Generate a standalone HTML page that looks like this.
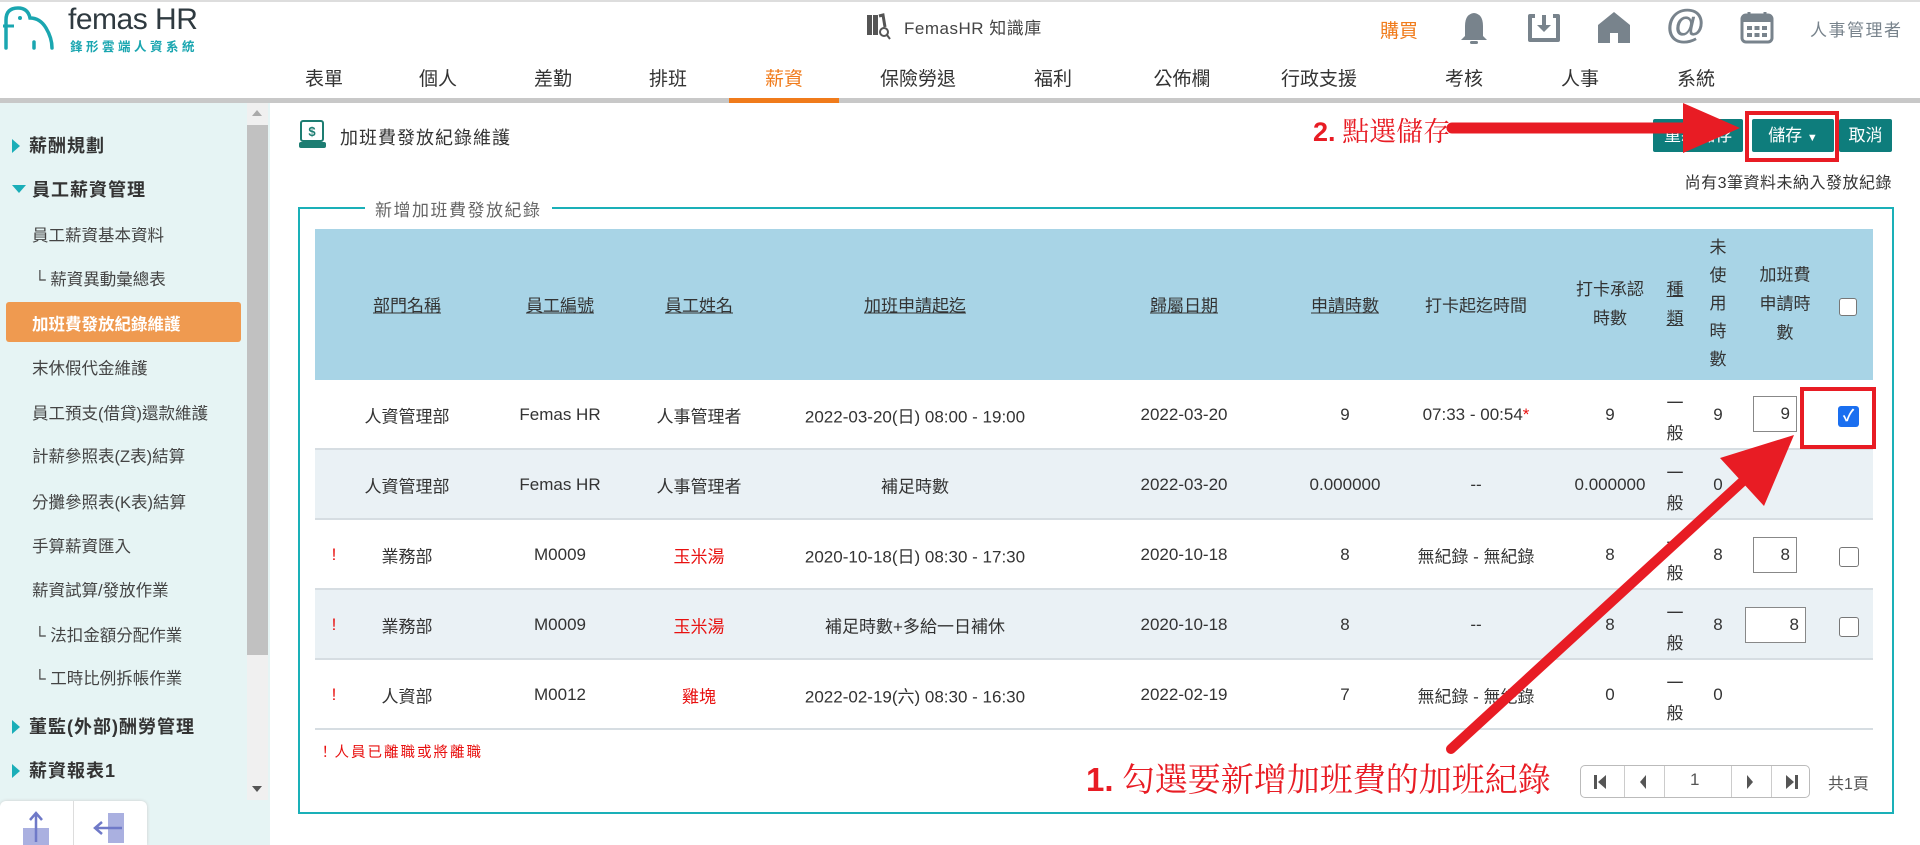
<!DOCTYPE html>
<html><head><meta charset="utf-8">
<style>
*{margin:0;padding:0;box-sizing:border-box}
body{width:1920px;height:845px;overflow:hidden;background:#fff;font-family:"Liberation Sans","Noto Sans CJK TC",sans-serif;color:#333;position:relative}
.a{position:absolute;white-space:nowrap}
.nav{top:64px;font-size:19px;color:#333;transform:translateX(-50%)}
.sb{left:0;font-size:16.5px;color:#444}
.sbt{left:12px;font-size:18px;color:#333;font-weight:bold;letter-spacing:1px}
.tri{display:inline-block;width:0;height:0;border-top:7px solid transparent;border-bottom:7px solid transparent;border-left:8px solid #1aaeb8;margin-right:9px;vertical-align:-1px}
.trid{display:inline-block;width:0;height:0;border-left:7px solid transparent;border-right:7px solid transparent;border-top:8px solid #1aaeb8;margin-right:6px;vertical-align:3px}
.c{position:absolute;transform:translate(-50%,-50%);white-space:nowrap;text-align:center;font-size:17px;color:#333}
.h{text-decoration:underline;color:#333}
.red{color:#e8100f}
.row{position:absolute;left:315px;width:1558px;height:70px;border-bottom:2px solid #d6dde2}
.inp{position:absolute;background:#fff;border:1px solid #888;height:36px;text-align:right;padding-right:6px;font-size:17px;line-height:34px}
.cb{position:absolute;width:18px;height:18px;border:1.5px solid #777;border-radius:3px;background:#fff}
.btn{position:absolute;top:119px;height:33px;background:#0e7d7c;color:#fff;font-size:17px;line-height:33px;text-align:center;border-radius:2px}
</style></head><body>
<div class="a" style="left:0;top:0;width:1920px;height:2px;background:#ddd"></div>
<svg class="a" style="left:2px;top:4px" width="56" height="48" viewBox="0 0 56 48"><path d="M4 44 V16 Q4 4 16 4 Q26 4 28 14 Q38 14 44 24 Q50 34 50 44" fill="none" stroke="#1aa6b0" stroke-width="3.5" stroke-linecap="round"/><path d="M1 22 H12" stroke="#1aa6b0" stroke-width="3"/><circle cx="18" cy="14" r="2" fill="#1aa6b0"/><path d="M32 38 V44" stroke="#1aa6b0" stroke-width="3.5" stroke-linecap="round"/></svg>
<div class="a" style="left:68px;top:3px;font-size:30px;color:#2f3a40;letter-spacing:-0.5px">femas HR</div>
<div class="a" style="left:70px;top:36px;font-size:12.5px;color:#1aa6b0;letter-spacing:3.5px;font-weight:bold">鋒形雲端人資系統</div>
<svg class="a" style="left:866px;top:13px" width="26" height="28" viewBox="0 0 26 28"><path d="M1 2 H6 V22 H1Z M7 2 H12 V22 H7Z" fill="#555"/><path d="M13 3 L17 2 L19 14" fill="none" stroke="#555" stroke-width="3"/><circle cx="18" cy="19" r="4" fill="none" stroke="#555" stroke-width="2"/><path d="M21 22 L24 26" stroke="#555" stroke-width="2"/></svg>
<div class="a" style="left:904px;top:14px;font-size:17px;color:#444;letter-spacing:0.5px">FemasHR 知識庫</div>
<div class="a" style="left:1380px;top:16px;font-size:19px;color:#f07b1b">購買</div>
<svg class="a" style="left:1459px;top:12px" width="30" height="34" viewBox="0 0 30 34"><path d="M15 1 Q24 2 24 14 V24 L28 28 H2 L6 24 V14 Q6 2 15 1Z" fill="#78838c"/><rect x="11" y="29" width="8" height="3" rx="1.5" fill="#78838c"/></svg>
<svg class="a" style="left:1527px;top:13px" width="34" height="30" viewBox="0 0 34 30"><path d="M8 3 H3 V27 H31 V3 H26" fill="none" stroke="#78838c" stroke-width="4" stroke-linejoin="round"/><path d="M17 2 V14" stroke="#78838c" stroke-width="4"/><path d="M10 12 H24 L17 19Z" fill="#78838c"/></svg>
<svg class="a" style="left:1597px;top:11px" width="34" height="32" viewBox="0 0 34 32"><path d="M17 1 L33 14 V32 H21 V22 H13 V32 H1 V14Z" fill="#78838c"/></svg>
<div class="a" style="left:1666px;top:2px;font-size:40px;font-weight:bold;color:#78838c;line-height:44px">@</div>
<svg class="a" style="left:1740px;top:10px" width="34" height="34" viewBox="0 0 34 34"><rect x="2" y="5" width="30" height="27" rx="4" fill="none" stroke="#78838c" stroke-width="3"/><rect x="2" y="5" width="30" height="7" fill="#78838c"/><path d="M9 2 V8 M25 2 V8" stroke="#78838c" stroke-width="3"/><g fill="#78838c"><rect x="7" y="16" width="5" height="4"/><rect x="14.5" y="16" width="5" height="4"/><rect x="22" y="16" width="5" height="4"/><rect x="7" y="23" width="5" height="4"/><rect x="14.5" y="23" width="5" height="4"/><rect x="22" y="23" width="5" height="4"/></g></svg>
<div class="a" style="left:1810px;top:16px;font-size:17px;color:#78838c;letter-spacing:1.5px">人事管理者</div>
<div class="a nav" style="left:324px">表單</div>
<div class="a nav" style="left:438px">個人</div>
<div class="a nav" style="left:553px">差勤</div>
<div class="a nav" style="left:668px">排班</div>
<div class="a nav" style="left:784px;color:#f07b1b">薪資</div>
<div class="a nav" style="left:918px">保險勞退</div>
<div class="a nav" style="left:1053px">福利</div>
<div class="a nav" style="left:1182px">公佈欄</div>
<div class="a nav" style="left:1319px">行政支援</div>
<div class="a nav" style="left:1464px">考核</div>
<div class="a nav" style="left:1580px">人事</div>
<div class="a nav" style="left:1696px">系統</div>
<div class="a" style="left:0;top:98px;width:1920px;height:5px;background:#c8c8c8"></div>
<div class="a" style="left:729px;top:98px;width:110px;height:5px;background:#f07b1b"></div>
<div class="a" style="left:0;top:103px;width:270px;height:742px;background:#e6f4f4"></div>
<div class="a" style="left:247px;top:103px;width:21px;height:697px;background:#f0f0f0"></div>
<div class="a" style="left:247px;top:125px;width:21px;height:530px;background:#c1c1c1"></div>
<div class="a" style="left:252px;top:110px;width:0;height:0;border-left:5px solid transparent;border-right:5px solid transparent;border-bottom:6px solid #aaa"></div>
<div class="a" style="left:252px;top:786px;width:0;height:0;border-left:5px solid transparent;border-right:5px solid transparent;border-top:6px solid #555"></div>
<div class="a sbt" style="top:132px"><span class="tri"></span>薪酬規劃</div>
<div class="a sbt" style="top:176px"><span class="trid"></span>員工薪資管理</div>
<div class="a sb" style="left:32px;top:222px">員工薪資基本資料</div>
<div class="a sb" style="left:34px;top:266px">└ 薪資異動彙總表</div>
<div class="a" style="left:6px;top:302px;width:235px;height:40px;background:#ef9a50;border-radius:3px"></div>
<div class="a sb" style="left:32px;top:311px;color:#fff;font-weight:bold">加班費發放紀錄維護</div>
<div class="a sb" style="left:32px;top:355px">末休假代金維護</div>
<div class="a sb" style="left:32px;top:400px">員工預支(借貸)還款維護</div>
<div class="a sb" style="left:32px;top:443px">計薪參照表(Z表)結算</div>
<div class="a sb" style="left:32px;top:489px">分攤參照表(K表)結算</div>
<div class="a sb" style="left:32px;top:533px">手算薪資匯入</div>
<div class="a sb" style="left:32px;top:577px">薪資試算/發放作業</div>
<div class="a sb" style="left:34px;top:622px">└ 法扣金額分配作業</div>
<div class="a sb" style="left:34px;top:665px">└ 工時比例拆帳作業</div>
<div class="a sbt" style="top:713px"><span class="tri"></span>董監(外部)酬勞管理</div>
<div class="a sbt" style="top:757px"><span class="tri"></span>薪資報表1</div>
<div class="a" style="left:0;top:801px;width:147px;height:44px;background:#fff;border-radius:6px 6px 0 0;box-shadow:0 0 3px #ccc"></div>
<div class="a" style="left:73px;top:801px;width:1px;height:44px;background:#ddd"></div>
<svg class="a" style="left:20px;top:810px" width="32" height="35" viewBox="0 0 32 35"><rect x="3" y="18" width="26" height="17" fill="#aab0e0"/><path d="M16 32 V4 M10 10 L16 3 L22 10" fill="none" stroke="#6f79c8" stroke-width="2.5"/></svg>
<svg class="a" style="left:92px;top:810px" width="36" height="35" viewBox="0 0 36 35"><rect x="16" y="3" width="16" height="30" fill="#aab0e0"/><path d="M30 18 H4 M10 12 L3 18 L10 24" fill="none" stroke="#6f79c8" stroke-width="2.5"/></svg>
<svg class="a" style="left:299px;top:120px" width="28" height="30" viewBox="0 0 28 30"><rect x="2" y="1" width="22" height="20" rx="2" fill="none" stroke="#1d7d72" stroke-width="2"/><text x="13" y="16" font-size="13" font-weight="bold" fill="#1d7d72" text-anchor="middle" font-family="Liberation Sans">$</text><rect x="0" y="22" width="27" height="6" rx="2" fill="#1d7d72"/></svg>
<div class="a" style="left:340px;top:124px;font-size:18px;color:#333;letter-spacing:1px">加班費發放紀錄維護</div>
<div class="btn" style="left:1653px;width:90px">重新儲存</div>
<div class="btn" style="left:1752px;width:82px">儲存 <span style="font-size:11px">▼</span></div>
<div class="btn" style="left:1839px;width:53px">取消</div>
<div class="a" style="left:1745px;top:111px;width:94px;height:51px;border:4px solid #e81c24"></div>
<div class="a" style="right:28px;top:169px;font-size:16px;color:#333;letter-spacing:0.5px">尚有3筆資料未納入發放紀錄</div>
<div class="a" style="left:298px;top:207px;width:1596px;height:607px;border:2.5px solid #1ab0b8"></div>
<div class="a" style="left:365px;top:196px;padding:0 10px;background:#fff;font-size:17px;color:#666;letter-spacing:1.5px">新增加班費發放紀錄</div>
<div class="a" style="left:315px;top:229px;width:1558px;height:151px;background:#a8d4e6"></div>
<div class="c h" style="left:407px;top:304px">部門名稱</div>
<div class="c h" style="left:560px;top:304px">員工編號</div>
<div class="c h" style="left:699px;top:304px">員工姓名</div>
<div class="c h" style="left:915px;top:304px">加班申請起迄</div>
<div class="c h" style="left:1184px;top:304px">歸屬日期</div>
<div class="c h" style="left:1345px;top:304px">申請時數</div>
<div class="c" style="left:1476px;top:304px">打卡起迄時間</div>
<div class="c" style="left:1610px;top:304px;line-height:29px">打卡承認<br>時數</div>
<div class="c h" style="left:1675px;top:304px;line-height:29px">種<br>類</div>
<div class="c" style="left:1718px;top:304px;line-height:28px">未<br>使<br>用<br>時<br>數</div>
<div class="c" style="left:1785px;top:304px;line-height:29px">加班費<br>申請時<br>數</div>
<div class="cb" style="left:1839px;top:298px"></div>
<div class="row" style="top:380px;background:#fff"></div>
<div class="row" style="top:450px;background:#eaf1f5"></div>
<div class="row" style="top:520px;background:#fff"></div>
<div class="row" style="top:590px;background:#eaf1f5"></div>
<div class="row" style="top:660px;background:#fff"></div>
<div class="c" style="left:407px;top:415px">人資管理部</div><div class="c" style="left:560px;top:415px">Femas HR</div><div class="c" style="left:699px;top:415px">人事管理者</div><div class="c" style="left:915px;top:415px">2022-03-20(日) 08:00 - 19:00</div><div class="c" style="left:1184px;top:415px">2022-03-20</div><div class="c" style="left:1345px;top:415px">9</div><div class="c" style="left:1476px;top:415px">07:33 - 00:54<span class="red">*</span></div><div class="c" style="left:1610px;top:415px">9</div><div class="c" style="left:1675px;top:419px;line-height:30px">一<br>般</div><div class="c" style="left:1718px;top:415px">9</div>
<div class="inp" style="left:1753px;top:396px;width:44px">9</div>
<div class="a" style="left:1838px;top:406px;width:21px;height:21px;background:#1a6ff0;border-radius:3px;color:#fff;font-size:16px;line-height:21px;text-align:center;font-weight:bold">✓</div>
<div class="a" style="left:1800px;top:387px;width:76px;height:62px;border:4px solid #e81c24"></div>
<div class="c" style="left:407px;top:485px">人資管理部</div><div class="c" style="left:560px;top:485px">Femas HR</div><div class="c" style="left:699px;top:485px">人事管理者</div><div class="c" style="left:915px;top:485px">補足時數</div><div class="c" style="left:1184px;top:485px">2022-03-20</div><div class="c" style="left:1345px;top:485px">0.000000</div><div class="c" style="left:1476px;top:485px">--</div><div class="c" style="left:1610px;top:485px">0.000000</div><div class="c" style="left:1675px;top:489px;line-height:30px">一<br>般</div><div class="c" style="left:1718px;top:485px">0</div>
<div class="c red" style="left:334px;top:555px">!</div><div class="c" style="left:407px;top:555px">業務部</div><div class="c" style="left:560px;top:555px">M0009</div><div class="c red" style="left:699px;top:555px">玉米湯</div><div class="c" style="left:915px;top:555px">2020-10-18(日) 08:30 - 17:30</div><div class="c" style="left:1184px;top:555px">2020-10-18</div><div class="c" style="left:1345px;top:555px">8</div><div class="c" style="left:1476px;top:555px">無紀錄 - 無紀錄</div><div class="c" style="left:1610px;top:555px">8</div><div class="c" style="left:1675px;top:559px;line-height:30px">一<br>般</div><div class="c" style="left:1718px;top:555px">8</div>
<div class="inp" style="left:1753px;top:537px;width:44px">8</div>
<div class="cb" style="left:1839px;top:547px;width:20px;height:20px"></div>
<div class="c red" style="left:334px;top:625px">!</div><div class="c" style="left:407px;top:625px">業務部</div><div class="c" style="left:560px;top:625px">M0009</div><div class="c red" style="left:699px;top:625px">玉米湯</div><div class="c" style="left:915px;top:625px">補足時數+多給一日補休</div><div class="c" style="left:1184px;top:625px">2020-10-18</div><div class="c" style="left:1345px;top:625px">8</div><div class="c" style="left:1476px;top:625px">--</div><div class="c" style="left:1610px;top:625px">8</div><div class="c" style="left:1675px;top:629px;line-height:30px">一<br>般</div><div class="c" style="left:1718px;top:625px">8</div>
<div class="inp" style="left:1745px;top:607px;width:61px">8</div>
<div class="cb" style="left:1839px;top:617px;width:20px;height:20px"></div>
<div class="c red" style="left:334px;top:695px">!</div><div class="c" style="left:407px;top:695px">人資部</div><div class="c" style="left:560px;top:695px">M0012</div><div class="c red" style="left:699px;top:695px">雞塊</div><div class="c" style="left:915px;top:695px">2022-02-19(六) 08:30 - 16:30</div><div class="c" style="left:1184px;top:695px">2022-02-19</div><div class="c" style="left:1345px;top:695px">7</div><div class="c" style="left:1476px;top:695px">無紀錄 - 無紀錄</div><div class="c" style="left:1610px;top:695px">0</div><div class="c" style="left:1675px;top:699px;line-height:30px">一<br>般</div><div class="c" style="left:1718px;top:695px">0</div>
<div class="a" style="left:318px;top:741px;font-size:14.5px;color:#e8100f;letter-spacing:2px">！人員已離職或將離職</div>
<div class="a" style="left:1580px;top:765px;width:230px;height:33px;border:1px solid #bbb;border-radius:5px;background:#fff"></div>
<div class="a" style="left:1624px;top:766px;width:1px;height:31px;background:#ccc"></div>
<div class="a" style="left:1664px;top:766px;width:1px;height:31px;background:#ccc"></div>
<div class="a" style="left:1731px;top:766px;width:1px;height:31px;background:#ccc"></div>
<div class="a" style="left:1771px;top:766px;width:1px;height:31px;background:#ccc"></div>
<svg class="a" style="left:1593px;top:774px" width="14" height="16"><rect x="1" y="1" width="3" height="14" fill="#555"/><path d="M13 1 V15 L5 8Z" fill="#555"/></svg>
<svg class="a" style="left:1638px;top:774px" width="10" height="16"><path d="M8 1 V15 L2 8Z" fill="#555"/></svg>
<div class="a" style="left:1690px;top:770px;font-size:17px;color:#555">1</div>
<svg class="a" style="left:1745px;top:774px" width="10" height="16"><path d="M2 1 V15 L8 8Z" fill="#555"/></svg>
<svg class="a" style="left:1785px;top:774px" width="14" height="16"><path d="M1 1 V15 L9 8Z" fill="#555"/><rect x="10" y="1" width="3" height="14" fill="#555"/></svg>
<div class="a" style="left:1828px;top:770px;font-size:16px;color:#555">共1頁</div>
<div class="a" style="left:1313px;top:110px;font-size:27px;color:#e81c24;font-family:'Liberation Serif','Noto Serif CJK SC',serif"><b style="font-family:'Liberation Sans',sans-serif">2.</b> 點選儲存</div>
<div class="a" style="left:1086px;top:754px;font-size:33px;color:#e81c24;font-family:'Liberation Serif','Noto Serif CJK SC',serif"><b style="font-family:'Liberation Sans',sans-serif">1.</b> 勾選要新增加班費的加班紀錄</div>
<svg class="a" style="left:0;top:0" width="1920" height="845">
<path d="M1452 128 H1690" stroke="#e81c24" stroke-width="11" stroke-linecap="round"/>
<path d="M1740 128 L1683 103 L1683 153Z" fill="#e81c24"/>
<path d="M1451 749 L1742 482" stroke="#e81c24" stroke-width="10" stroke-linecap="round"/>
<path d="M1794 435 L1764 506 L1720 458Z" fill="#e81c24"/>
</svg>
</body></html>
